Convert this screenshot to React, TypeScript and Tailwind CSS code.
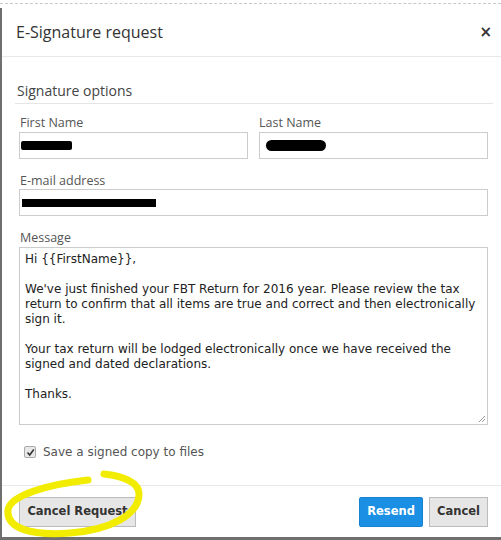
export default function App() {
  const label = "block text-[12.5px] leading-[16px] text-[#555] font-['Open_Sans',sans-serif]";
  const input = "h-[27px] w-full border border-[#ccc] bg-white";
  return (
    <div className="relative h-[540px] w-[501px] overflow-hidden bg-white">
      <div className="h-[8px] border-b border-dashed border-[#c8c8c8] translate-y-[-4px]" />
      <div className="flex h-[532px] flex-col border-b-[3px] border-l-[2px] border-[#6f6f6f] font-['Open_Sans',sans-serif]">
        <div className="flex h-[49px] shrink-0 items-center justify-between border-b border-[#e8e8e8] pl-[14px] pr-[9px]">
          <span className="text-[16px] text-[#333]">E-Signature request</span>
          <span className="text-[15px] font-bold text-[#333] font-['DejaVu_Sans',sans-serif]">×</span>
        </div>
        <div className="pl-[17px] pr-[13px] pt-[24px]">
          <div className="ml-[-4px] mr-[-5px] border-b border-[#e5e5e5] pb-[2px] pl-[2px] text-[14px] leading-[20px] text-[#444]">
            Signature options
          </div>
          <div className="mt-[11px] grid grid-cols-2 gap-x-[11px]">
            <div>
              <label className={label + " pl-[1px]"}>First Name</label>
              <div className={input + " mt-[1px] flex items-center pl-[1px]"}>
                <div className="h-[9px] w-[51px] rounded-[2px] bg-black" />
              </div>
            </div>
            <div>
              <label className={label}>Last Name</label>
              <div className={input + " mt-[1px] flex items-center pl-[6px]"}>
                <div className="h-[11px] w-[60px] rounded-[6px] bg-black" />
              </div>
            </div>
          </div>
          <div className="mt-[14px]">
            <label className={label + " pl-[1px]"}>E-mail address</label>
            <div className={input + " flex items-center pl-[2px]"}>
              <div className="h-[8px] w-[134px] bg-black" />
            </div>
          </div>
          <div className="mt-[14px]">
            <label className={label + " pl-[1px]"}>Message</label>
            <div className="relative mt-[1px] h-[178px] w-full border border-[#ccc] bg-white px-[5px] pt-[4px] text-[12px] leading-[15px] text-[#222] font-['DejaVu_Sans',sans-serif] whitespace-pre-wrap">
              {"Hi {{FirstName}},\n\nWe've just finished your FBT Return for 2016 year. Please review the tax return to confirm that all items are true and correct and then electronically sign it.\n\nYour tax return will be lodged electronically once we have received the signed and dated declarations.\n\nThanks."}
              <svg className="absolute bottom-[1px] right-[1px]" width="9" height="9" viewBox="0 0 9 9">
                <path d="M8 2 L2 8 M8 5 L5 8" stroke="#999" strokeWidth="1" />
              </svg>
            </div>
          </div>
          <div className="mt-[19px] flex h-[16px] items-center gap-[7px] pl-[5px]">
            <div className="flex h-[12px] w-[12px] items-center justify-center rounded-[2px] border border-[#aaa] bg-[#e8e8e8]">
              <svg width="9" height="9" viewBox="0 0 9 9">
                <path d="M1.5 4.5 L3.7 7 L7.8 1.5" fill="none" stroke="#333" strokeWidth="1.6" />
              </svg>
            </div>
            <span className="text-[12px] text-[#555] font-['DejaVu_Sans',sans-serif]">Save a signed copy to files</span>
          </div>
        </div>
        <div className="mt-[25px] flex items-center justify-between border-t border-[#e8e8e8] pl-[17px] pr-[13px] pt-[11px] font-['DejaVu_Sans',sans-serif] text-[11.5px] font-bold">
          <button className="h-[30px] w-[117px] border border-[#bbb] bg-[#e6e6e6] text-[#333]">Cancel Request</button>
          <div className="flex gap-[6px]">
            <button className="h-[30px] w-[64px] rounded-[2px] border border-[#1683d0] bg-[#1a8fe3] text-white">Resend</button>
            <button className="h-[30px] w-[59px] border border-[#bbb] bg-[#e6e6e6] text-[#333]">Cancel</button>
          </div>
        </div>
      </div>
      <svg className="pointer-events-none absolute left-0 top-0" width="501" height="540" viewBox="0 0 501 540">
        <path
          d="M88 480 C50 484 10 495 8 510 C6 528 30 536 70 533 C110 530 138 515 139 495 C140 482 122 476 104 474"
          fill="none"
          stroke="#f2ec00"
          strokeWidth="7"
          strokeLinecap="round"
        />
      </svg>
    </div>
  );
}
